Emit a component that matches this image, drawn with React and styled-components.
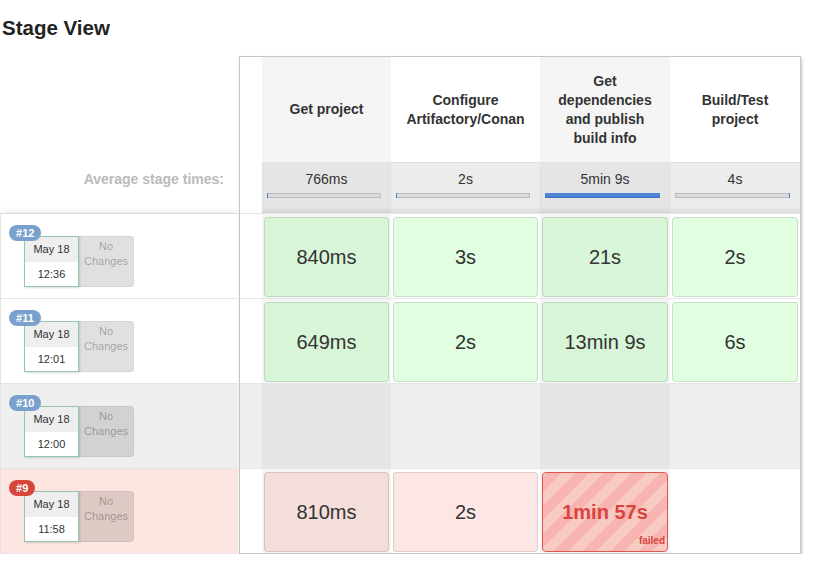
import styled, { createGlobalStyle } from "styled-components";

const GlobalStyle = createGlobalStyle`
  body {
    margin: 0;
    background: #fff;
    font-family: "Liberation Sans", Arial, Helvetica, sans-serif;
    color: #333;
  }
`;

const Page = styled.div`
  width: 821px;
`;

const Title = styled.h2`
  margin: 0;
  padding: 16px 0 16px 2px;
  font-size: 20.5px;
  line-height: 24px;
  font-weight: 700;
  color: #222;
`;

const Main = styled.div`
  display: flex;
  align-items: flex-start;
`;

/* left column with the build history */
const Legend = styled.div`
  width: 238px;
  flex: none;
`;

const LegendHead = styled.div`
  height: 106px;
`;

const AvgLabel = styled.div`
  height: 51px;
  box-sizing: border-box;
  padding: 9px 14px 0 0;
  text-align: right;
  font-size: 14px;
  line-height: 17px;
  font-weight: 700;
  color: #bbb;
`;

const BuildRows = styled.div`
  border-top: 1px solid #dcdcdc;
  border-left: 1px solid #e4e4e4;
  box-shadow: 0 -4px 6px -3px rgba(0, 0, 0, 0.12);
`;

const rowColors = {
  success: "#fff",
  aborted: "#efefef",
  failed: "#fde6e1",
};

const BuildRow = styled.div`
  position: relative;
  height: 85px;
  box-sizing: border-box;
  padding: 22px 0 0 23px;
  border-bottom: 1px solid #e4e4e4;
  background: ${(p) => rowColors[p.$status]};
  display: flex;
`;

const Badge = styled.span`
  position: absolute;
  left: 8px;
  top: 11px;
  height: 16px;
  padding: 0 7px;
  border-radius: 8px;
  background: ${(p) => (p.$failed ? "#d8453c" : "#7aa1cd")};
  color: #fff;
  font-size: 11px;
  line-height: 16px;
  font-weight: 700;
  z-index: 1;
`;

const DateBox = styled.div`
  width: 55px;
  height: 51px;
  box-sizing: border-box;
  border: 1px solid #93c9aa;
  box-shadow: 1px 1px 2px rgba(0, 0, 0, 0.15);
  background: #fff;
  font-size: 11px;
  color: #333;
  text-align: center;
`;

const DateLine = styled.div`
  height: ${(p) => (p.$top ? 25 : 24)}px;
  line-height: ${(p) => (p.$top ? 25 : 24)}px;
  background: ${(p) => (p.$top ? "#eee" : "#fff")};
`;

const NoChanges = styled.div`
  width: 55px;
  height: 51px;
  box-sizing: border-box;
  padding-top: 2px;
  border: 1px solid rgba(0, 0, 0, 0.05);
  border-left: none;
  border-radius: 0 4px 4px 0;
  background: rgba(0, 0, 0, 0.12);
  color: rgba(0, 0, 0, 0.3);
  font-size: 11px;
  line-height: 15px;
  text-align: center;
`;

/* the stage table */
const Box = styled.div`
  margin-left: 1px;
  border: 1px solid #c6c6c6;
  box-shadow: 1px 2px 3px rgba(0, 0, 0, 0.22);
  background: #fff;
  display: grid;
  grid-template-columns: 22px 129px 149px 130px 130px;
  grid-template-rows: 105px 51px repeat(4, 85px);
`;

const shadeLayer = "linear-gradient(rgba(0,0,0,0.04), rgba(0,0,0,0.04))";

const HeadCell = styled.div`
  display: flex;
  align-items: center;
  justify-content: center;
  padding: 0 12px;
  text-align: center;
  font-size: 14px;
  line-height: 19px;
  font-weight: 700;
  color: #333;
  background: ${(p) => (p.$shade ? "#f5f5f5" : "#fff")};
`;

const Blank = styled.div`
  background: ${(p) => p.$bg || "#fff"};
  box-shadow: ${(p) => (p.$line ? "inset 0 1px #e6e6e6" : "none")};
`;

const AvgCell = styled.div`
  box-sizing: border-box;
  padding-top: 9px;
  background: ${(p) => (p.$shade ? "#e5e5e5" : "#ececec")};
  box-shadow: inset 0 -5px 6px -4px rgba(0, 0, 0, 0.12), inset 0 1px #e2e2e2;
  text-align: center;
  font-size: 14px;
  line-height: 17px;
  color: #333;
`;

const Track = styled.div`
  height: 5px;
  margin: 5px 10px 0 5px;
  background: #dcdcdc;
  box-shadow: inset 0 0 0 1px #bcbcbc;
  display: flex;
  justify-content: ${(p) => (p.$end ? "flex-end" : "flex-start")};
`;

const Fill = styled.div`
  height: 100%;
  min-width: 1px;
  background: #4f84d4;
  box-shadow: inset 0 -1px #3f70bd;
`;

const DataCell = styled.div`
  display: flex;
  padding: 4px 2px 1px 2px;
  box-sizing: border-box;
  background: ${(p) => (p.$shade ? `${shadeLayer}, ` : "")}${(p) => p.$bg};
  box-shadow: inset 0 1px #e6e6e6;
`;

const stageColors = {
  success: "rgba(90, 250, 90, 0.18)",
  unstable: "rgba(240, 60, 30, 0.12)",
  failed:
    "repeating-linear-gradient(-45deg, #f8cbc2 0 10px, #f7b4b0 10px 20px)",
};

const StageBox = styled.div`
  position: relative;
  flex: 1;
  display: flex;
  align-items: center;
  justify-content: center;
  border: 1px solid
    ${(p) => (p.$status === "failed" ? "#e0564f" : "rgba(0, 0, 0, 0.12)")};
  border-radius: 4px;
  background: ${(p) => stageColors[p.$status]};
  font-size: 20px;
  font-weight: ${(p) => (p.$status === "failed" ? 700 : 400)};
  color: ${(p) => (p.$status === "failed" ? "#d9453e" : "#333")};
`;

const FailedTag = styled.span`
  position: absolute;
  right: 2px;
  bottom: 4px;
  font-size: 10px;
  line-height: 12px;
  font-weight: 700;
  color: #d9453e;
`;

const stages = [
  { name: "Get project", avg: "766ms", pct: 0 },
  { name: "Configure Artifactory/Conan", avg: "2s", pct: 0 },
  { name: "Get dependencies and publish build info", avg: "5min 9s", pct: 100 },
  { name: "Build/Test project", avg: "4s", pct: 0, end: true },
];

const builds = [
  {
    id: 12,
    time: "12:36",
    status: "success",
    cells: [
      { t: "840ms", s: "success" },
      { t: "3s", s: "success" },
      { t: "21s", s: "success" },
      { t: "2s", s: "success" },
    ],
  },
  {
    id: 11,
    time: "12:01",
    status: "success",
    cells: [
      { t: "649ms", s: "success" },
      { t: "2s", s: "success" },
      { t: "13min 9s", s: "success" },
      { t: "6s", s: "success" },
    ],
  },
  { id: 10, time: "12:00", status: "aborted", cells: [null, null, null, null] },
  {
    id: 9,
    time: "11:58",
    status: "failed",
    cells: [
      { t: "810ms", s: "unstable" },
      { t: "2s", s: "unstable" },
      { t: "1min 57s", s: "failed" },
      null,
    ],
  },
];

export default function App() {
  return (
    <Page>
      <GlobalStyle />
      <Title>Stage View</Title>
      <Main>
        <Legend>
          <LegendHead />
          <AvgLabel>Average stage times:</AvgLabel>
          <BuildRows>
            {builds.map((b) => (
              <BuildRow key={b.id} $status={b.status}>
                <Badge $failed={b.status === "failed"}>#{b.id}</Badge>
                <DateBox>
                  <DateLine $top>May 18</DateLine>
                  <DateLine>{b.time}</DateLine>
                </DateBox>
                <NoChanges>
                  No
                  <br />
                  Changes
                </NoChanges>
              </BuildRow>
            ))}
          </BuildRows>
        </Legend>

        <Box>
          <Blank />
          {stages.map((s, i) => (
            <HeadCell key={s.name} $shade={i % 2 === 0}>
              {s.name}
            </HeadCell>
          ))}

          <Blank />
          {stages.map((s, i) => (
            <AvgCell key={s.name} $shade={i % 2 === 0}>
              {s.avg}
              <Track $end={s.end}>
                <Fill style={{ width: `${s.pct}%` }} />
              </Track>
            </AvgCell>
          ))}

          {builds.map((b) => {
            const bg = b.status === "aborted" ? "#efefef" : "#fff";
            return [
              <Blank key={`${b.id}-blank`} $bg={bg} $line />,
              ...b.cells.map((c, i) => (
                <DataCell key={`${b.id}-${i}`} $bg={bg} $shade={i % 2 === 0}>
                  {c && (
                    <StageBox $status={c.s}>
                      {c.t}
                      {c.s === "failed" && <FailedTag>failed</FailedTag>}
                    </StageBox>
                  )}
                </DataCell>
              )),
            ];
          })}
        </Box>
      </Main>
    </Page>
  );
}
